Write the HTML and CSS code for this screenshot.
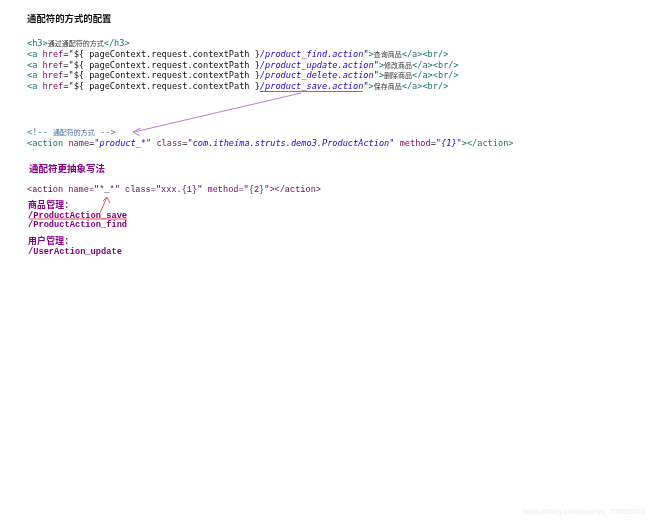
FILE: index.html
```html
<!DOCTYPE html>
<html lang="zh">
<head>
<meta charset="utf-8">
<title>通配符的方式的配置</title>
<link rel="stylesheet" href="styles.css">
</head>
<body>
<main class="doc">
  <h1 class="title">通配符的方式的配置</h1>
  <pre class="code links"><span class="tag">&lt;h3&gt;</span><span class="cn">通过通配符的方式</span><span class="tag">&lt;/h3&gt;</span>
<span class="tag">&lt;a</span> <span class="attr">href</span>=<span class="str">"</span>${ pageContext.request.contextPath }<span class="val">/product_find.action</span><span class="str">"</span><span class="tag">&gt;</span><span class="cn">查询商品</span><span class="tag">&lt;/a&gt;&lt;br/&gt;</span>
<span class="tag">&lt;a</span> <span class="attr">href</span>=<span class="str">"</span>${ pageContext.request.contextPath }<span class="val">/product_update.action</span><span class="str">"</span><span class="tag">&gt;</span><span class="cn">修改商品</span><span class="tag">&lt;/a&gt;&lt;br/&gt;</span>
<span class="tag">&lt;a</span> <span class="attr">href</span>=<span class="str">"</span>${ pageContext.request.contextPath }<span class="val">/product_delete.action</span><span class="str">"</span><span class="tag">&gt;</span><span class="cn">删除商品</span><span class="tag">&lt;/a&gt;&lt;br/&gt;</span>
<span class="tag">&lt;a</span> <span class="attr">href</span>=<span class="str">"</span>${ pageContext.request.contextPath }<span class="val under">/product_save.action</span><span class="str">"</span><span class="tag">&gt;</span><span class="cn">保存商品</span><span class="tag">&lt;/a&gt;&lt;br/&gt;</span></pre>
  <pre class="code config"><span class="comment">&lt;!-- <span class="cn">通配符的方式</span> --&gt;</span>
<span class="tag">&lt;action</span> <span class="attr">name</span>=<span class="val">"product_*"</span> <span class="attr">class</span>=<span class="val">"com.itheima.struts.demo3.ProductAction"</span> <span class="attr">method</span>=<span class="val">"{1}"</span><span class="tag">&gt;&lt;/action&gt;</span></pre>
  <h2 class="subtitle">通配符更抽象写法</h2>
  <p class="serif-code">&lt;action name="*_*" class="xxx.{1}" method="{2}"&gt;&lt;/action&gt;</p>
  <div class="urls">
    <p class="label">商品管理：</p>
    <p class="url">/ProductAction_save</p>
    <p class="url">/ProductAction_find</p>
  </div>
  <div class="urls second">
    <p class="label">用户管理：</p>
    <p class="url">/UserAction_update</p>
  </div>
</main>
<svg class="arrows" width="650" height="523" viewBox="0 0 650 523" aria-hidden="true">
  <path class="purple" d="M301 93 L134 132 M141 128 L133 132 L140 136"/>
  <path class="dot" d="M33 150 h1"/>
  <path class="red" d="M100 213 L107 197 M103 201 L107 197 L110 203"/>
  <path class="red" d="M29 219 L127 219"/>
</svg>
<footer class="mark">https://blog.csdn.net/qq_23053743</footer>
</body>
</html>
```

FILE: styles.css
```css
html, body {
  margin: 0;
  padding: 0;
  background: #fff;
}
body {
  width: 650px;
  height: 523px;
  position: relative;
  overflow: hidden;
}
.doc {
  padding: 13px 0 0 27px;
  filter: blur(0.25px);
}
.title {
  margin: 0;
  font: bold 9.4px/11px "Noto Sans CJK SC", sans-serif;
  color: #111;
}
.code {
  margin: 0;
  font: 8.6px/10.8px "DejaVu Sans Mono", monospace;
  color: #111;
}
.links { margin-top: 14px; }
.config { margin-top: 35px; }
.cn {
  font: 7px/10px "Noto Sans CJK SC", sans-serif;
  color: #333;
}
.tag { color: #1f7070; }
.attr { color: #7f0a62; }
.str { color: #111; }
.val { color: #2a00c8; font-style: italic; }
.under { border-bottom: 1px solid #7a6ad0; }
.comment { color: #4a6fa8; }
.comment .cn { color: #4a6fa8; }
.subtitle {
  margin: 13px 0 0 2px;
  font: bold 9.5px/12px "Noto Sans CJK SC", sans-serif;
  color: #800080;
}
.serif-code {
  margin: 10px 0 0;
  font: 8.6px/12px "Liberation Mono", monospace;
  color: #5c0a5c;
}
.urls {
  margin-top: 5px;
  padding-left: 1px;
}
.urls p { margin: 0; color: #800080; }
.label {
  font: bold 8.8px/11px "Liberation Mono", "Noto Sans CJK SC", sans-serif;
  letter-spacing: 0.3px;
}
.url {
  font: bold 8.7px/9.5px "Liberation Mono", monospace;
}
.second { margin-top: 6.5px; }
.arrows {
  position: absolute;
  left: 0;
  top: 0;
  fill: none;
}
.purple { stroke: #b86cc8; stroke-width: 0.9; }
.red { stroke: #e8505a; stroke-width: 1; }
.dot { stroke: #999; stroke-width: 1; }
.mark {
  position: absolute;
  right: 5px;
  bottom: 6px;
  font: 8px/10px "Liberation Sans", sans-serif;
  color: #eeeeee;
}
```
